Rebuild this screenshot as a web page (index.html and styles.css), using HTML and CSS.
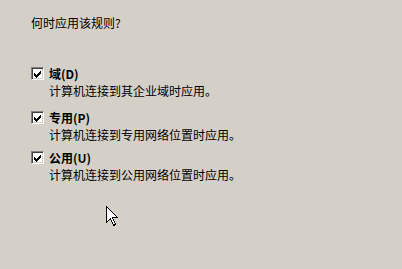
FILE: index.html
```html
<!DOCTYPE html>
<html lang="zh-CN">
<head>
<meta charset="utf-8">
<link rel="stylesheet" href="styles.css">
</head>
<body>
<div class="page">
  <div class="question">何时应用该规则?</div>
  <div class="options">
    <div class="option opt-domain">
      <span class="check"><svg width="9" height="9" viewBox="0 0 9 9"><path d="M1 3h1v1h1v1h1V4h1V3h1V2h1V1h1v3H7v1H6v1H5v1H4v1H3V7H2V6H1z" fill="#000"/></svg></span>
      <div class="text">
        <div class="label">域(D)</div>
        <div class="desc">计算机连接到其企业域时应用。</div>
      </div>
    </div>
    <div class="option opt-private">
      <span class="check"><svg width="9" height="9" viewBox="0 0 9 9"><path d="M1 3h1v1h1v1h1V4h1V3h1V2h1V1h1v3H7v1H6v1H5v1H4v1H3V7H2V6H1z" fill="#000"/></svg></span>
      <div class="text">
        <div class="label">专用(P)</div>
        <div class="desc">计算机连接到专用网络位置时应用。</div>
      </div>
    </div>
    <div class="option opt-public">
      <span class="check"><svg width="9" height="9" viewBox="0 0 9 9"><path d="M1 3h1v1h1v1h1V4h1V3h1V2h1V1h1v3H7v1H6v1H5v1H4v1H3V7H2V6H1z" fill="#000"/></svg></span>
      <div class="text">
        <div class="label">公用(U)</div>
        <div class="desc">计算机连接到公用网络位置时应用。</div>
      </div>
    </div>
  </div>
</div>
<svg class="cursor" width="13" height="21" viewBox="0 0 13 21">
  <path d="M0.5 0.5V16.5L4.5 12.5L7.5 19.5L9.5 18.5L6.5 11.5H11.5Z" fill="#fff" stroke="#000" stroke-width="1" shape-rendering="crispEdges"/>
</svg>
</body>
</html>
```
FILE: styles.css
```css
html, body {
  margin: 0;
  padding: 0;
}
body {
  width: 402px;
  height: 269px;
  background: #d4d0c8;
  font-family: "Noto Sans CJK SC", "Liberation Sans", sans-serif;
  font-size: 12px;
  color: #000;
  position: relative;
  overflow: hidden;
}
.page {
  padding: 16px 0 0 31px;
}
.question {
  line-height: 14px;
  height: 14px;
}
.options {
  margin-top: 37px;
  display: flex;
  flex-direction: column;
}
.option {
  display: flex;
  align-items: flex-start;
  gap: 5px;
}
.opt-private {
  margin-top: 13px;
}
.opt-public {
  margin-top: 9px;
}
.check {
  box-sizing: border-box;
  width: 13px;
  height: 13px;
  background: #fff;
  border-top: 1px solid #808080;
  border-left: 1px solid #808080;
  border-right: 1px solid #fff;
  border-bottom: 1px solid #fff;
  box-shadow: inset 1px 1px 0 #404040, inset -1px -1px 0 #d4d0c8;
  display: flex;
  align-items: center;
  justify-content: center;
  margin-top: 0;
}
.check svg {
  display: block;
  margin: 1px 0 0 0;
  shape-rendering: crispEdges;
}
.text {
  display: flex;
  flex-direction: column;
}
.label {
  font-weight: bold;
  line-height: 14px;
}
.desc {
  line-height: 14px;
  margin-top: 3px;
}
.cursor {
  position: absolute;
  left: 106px;
  top: 206px;
}
```
